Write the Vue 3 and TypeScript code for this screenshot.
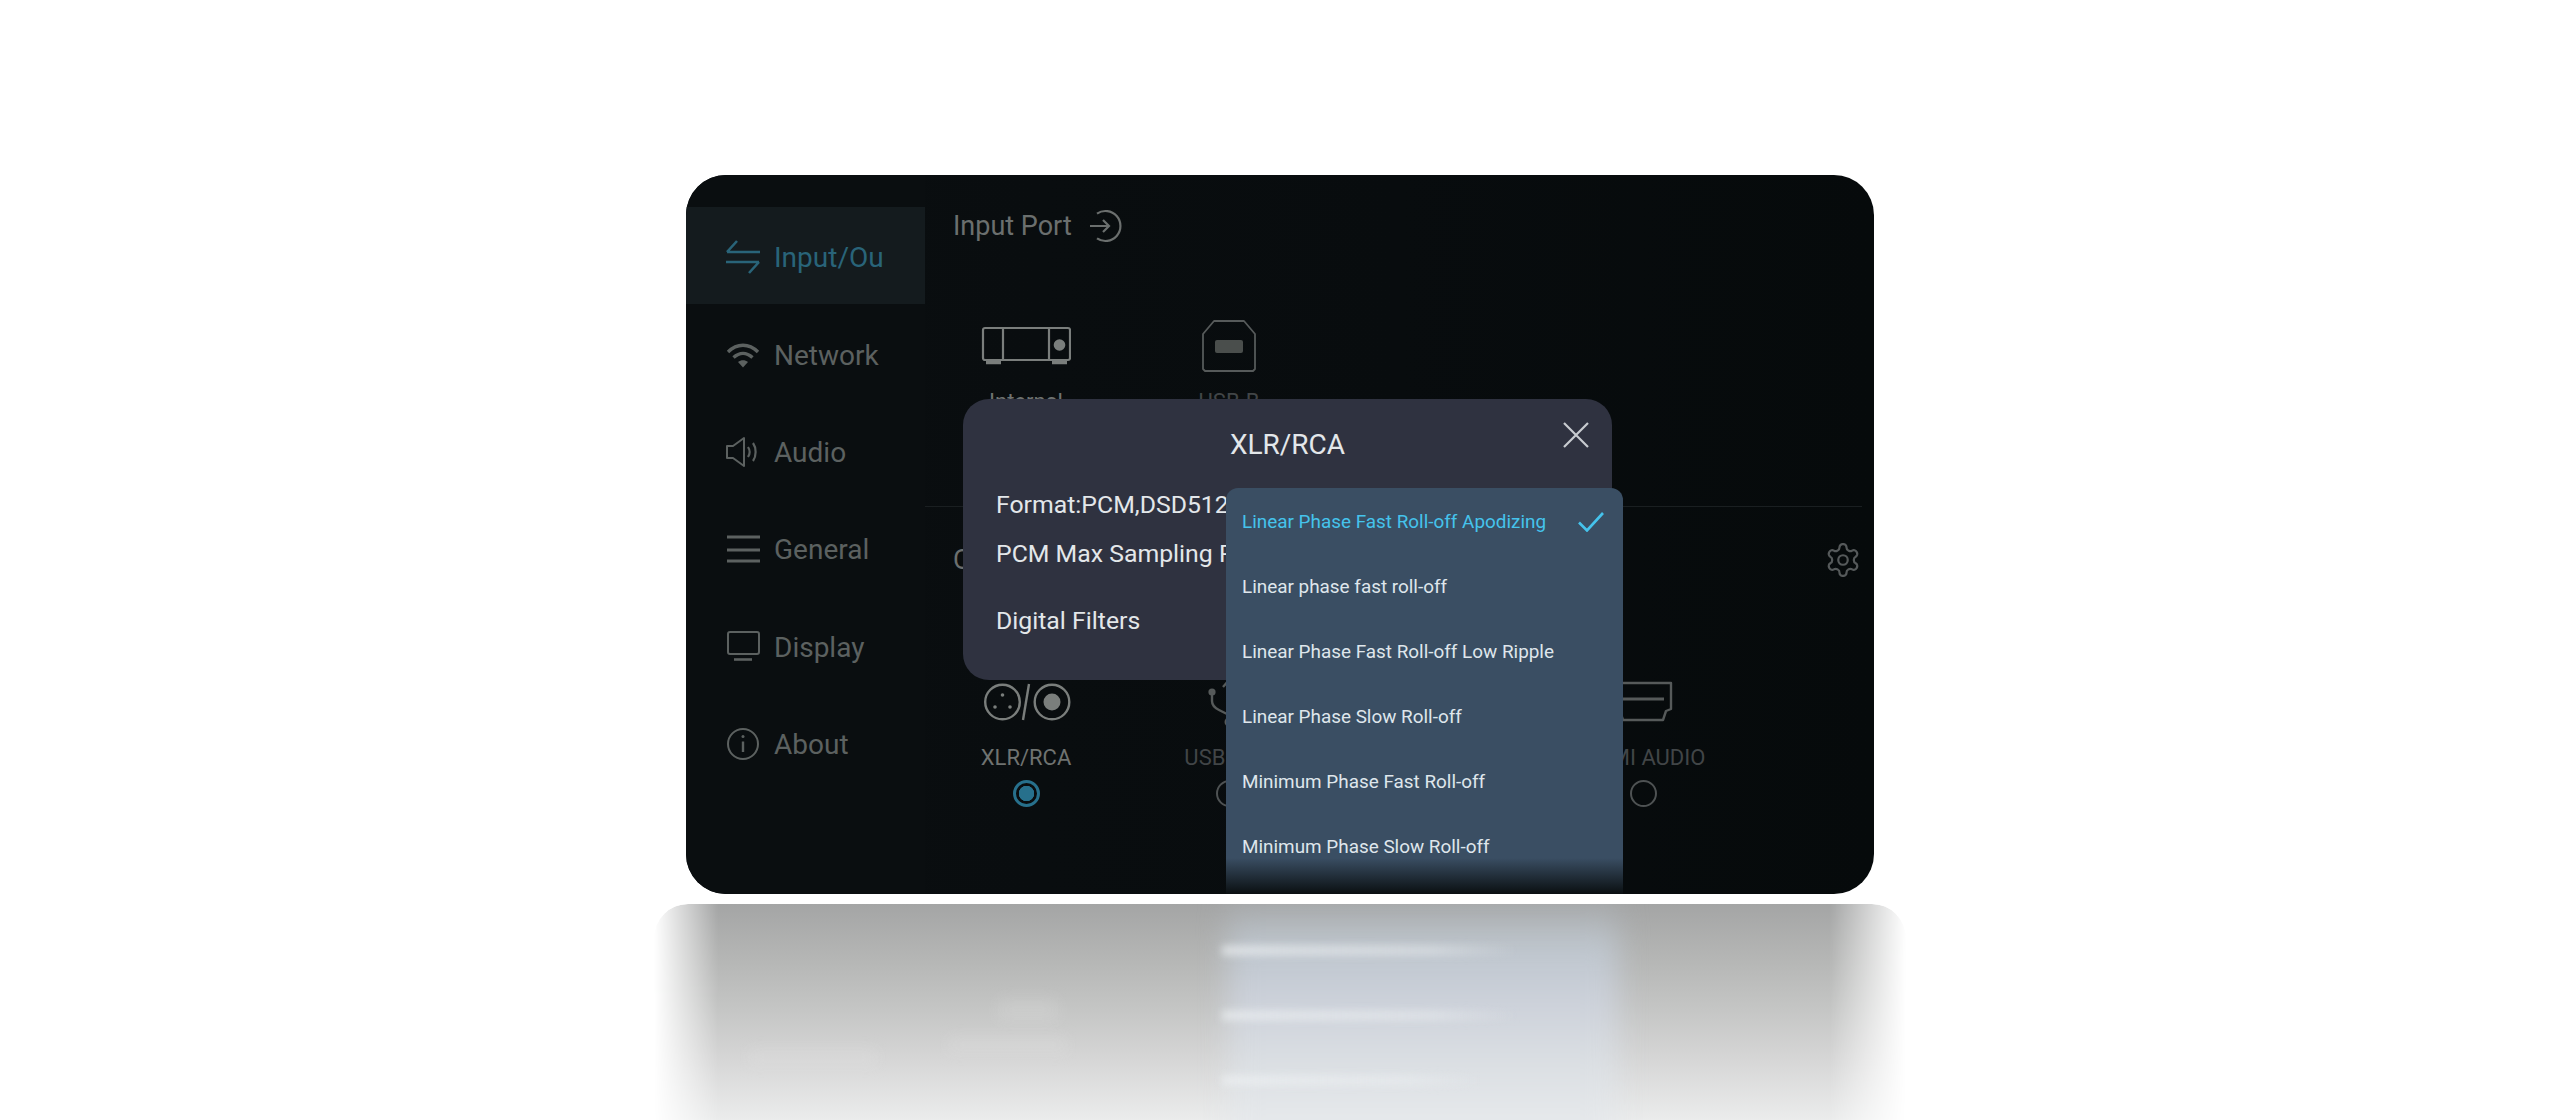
<script setup lang="ts">
const filters: string[] = [
  'Linear Phase Fast Roll-off Apodizing',
  'Linear phase fast roll-off',
  'Linear Phase Fast Roll-off Low Ripple',
  'Linear Phase Slow Roll-off',
  'Minimum Phase Fast Roll-off',
  'Minimum Phase Slow Roll-off',
]
</script>

<template>
  <div class="page">
    <section class="card">
      <aside class="sidebar">
        <div class="nav active">
          <svg class="nav-icon" viewBox="0 0 34 34" fill="none" stroke="currentColor" stroke-width="2.6">
            <path d="M1 12h33M1 12 11 1M0 22h33M33 22 23 33" />
          </svg>
          <span class="nav-label">Input/Output</span>
        </div>
        <div class="nav">
          <svg class="nav-icon" viewBox="0 0 34 34" fill="none" stroke="currentColor" stroke-width="3.4">
            <path d="M2 14C11 5 23 5 32 14M7.5 19.5C13.5 14 20.500 14 26.500 19.500" />
            <path d="M12 24c3-2.500 7-2.500 10 0l-5 5.500z" fill="currentColor" stroke="none" />
          </svg>
          <span class="nav-label">Network</span>
        </div>
        <div class="nav">
          <svg class="nav-icon" viewBox="0 0 34 34" fill="none" stroke="currentColor" stroke-width="2">
            <path d="M1 11h6L18 3v28L7 23H1z" stroke-linejoin="round" />
            <path d="M22 12c2 3 2 7 0 10M27 8c3.500 5 3.500 13 0 18" stroke-width="2.200" />
          </svg>
          <span class="nav-label">Audio</span>
        </div>
        <div class="nav">
          <svg class="nav-icon" viewBox="0 0 34 34" fill="none" stroke="currentColor" stroke-width="3.200">
            <path d="M1 5h33M1 18h33M1 29h33" />
          </svg>
          <span class="nav-label">General</span>
        </div>
        <div class="nav">
          <svg class="nav-icon" viewBox="0 0 34 34" fill="none" stroke="currentColor" stroke-width="2">
            <rect x="2" y="2" width="31" height="22" rx="2" />
            <path d="M8 29.500h18" stroke-width="2.600" />
          </svg>
          <span class="nav-label">Display</span>
        </div>
        <div class="nav">
          <svg class="nav-icon" viewBox="0 0 34 34" fill="none" stroke="currentColor" stroke-width="2">
            <circle cx="17" cy="17" r="15" />
            <path d="M17 14.500V25" stroke-width="2.400" />
            <circle cx="17" cy="9.500" r="1.500" fill="currentColor" stroke="none" />
          </svg>
          <span class="nav-label">About</span>
        </div>
      </aside>

      <main class="main">
        <div class="block input-block">
          <header class="head">
            <span class="head-title">Input Port</span>
            <svg class="head-icon" viewBox="0 0 34 34" fill="none" stroke="currentColor" stroke-width="2.200">
              <path d="M8 4.600A15 15 0 1 1 8 29.400" />
              <path d="M1 17h19M14 11l6 6-6 6" />
            </svg>
          </header>
          <div class="ports">
            <div class="port">
              <div class="port-icon">
                <svg width="90" height="40" viewBox="0 0 90 40" fill="none" stroke="#7a7e7c" stroke-width="2.200">
                  <rect x="2" y="2" width="87" height="32" rx="2" />
                  <path d="M22 2v32M68 2v32" />
                  <circle cx="78.500" cy="19" r="5.800" fill="#7a7e7c" stroke="none" />
                  <path d="M5 36.500h15M71 36.500h15" stroke-width="3.600" />
                </svg>
              </div>
              <div class="port-label">Internal</div>
              <div class="radio"></div>
            </div>
            <div class="port dim">
              <div class="port-icon">
                <svg width="54" height="52" viewBox="0 0 54 52" fill="none" stroke="#565a5a" stroke-width="1.800">
                  <path d="M1 14 12 1h30l11 13v35l-2 2H3l-2-2z" stroke-linejoin="round" />
                  <rect x="13" y="20" width="28" height="13" rx="2" fill="#4a4e4c" stroke="none" />
                </svg>
              </div>
              <div class="port-label">USB-B</div>
              <div class="radio"></div>
            </div>
          </div>
        </div>

        <div class="block output-block">
          <header class="head between">
            <span class="head-title">Output Port</span>
            <svg class="gear" viewBox="0 0 24 24" fill="none" stroke="currentColor" stroke-width="1.400">
              <path d="M12.220 2h-.44a2 2 0 0 0-2 2v.18a2 2 0 0 1-1 1.730l-.43.25a2 2 0 0 1-2 0l-.15-.08a2 2 0 0 0-2.730.73l-.22.38a2 2 0 0 0 .73 2.730l.15.1a2 2 0 0 1 1 1.720v.51a2 2 0 0 1-1 1.740l-.15.09a2 2 0 0 0-.73 2.730l.22.38a2 2 0 0 0 2.730.73l.15-.08a2 2 0 0 1 2 0l.43.25a2 2 0 0 1 1 1.730V20a2 2 0 0 0 2 2h.44a2 2 0 0 0 2-2v-.18a2 2 0 0 1 1-1.730l.43-.25a2 2 0 0 1 2 0l.15.08a2 2 0 0 0 2.730-.73l.22-.39a2 2 0 0 0-.73-2.730l-.15-.08a2 2 0 0 1-1-1.740v-.5a2 2 0 0 1 1-1.740l.15-.09a2 2 0 0 0 .73-2.730l-.22-.38a2 2 0 0 0-2.730-.73l-.15.08a2 2 0 0 1-2 0l-.43-.25a2 2 0 0 1-1-1.730V4a2 2 0 0 0-2-2z" />
              <circle cx="12" cy="12" r="3" />
            </svg>
          </header>
          <div class="ports out-ports">
            <div class="port">
              <div class="port-icon">
                <svg width="90" height="40" viewBox="0 0 90 40" fill="none" stroke="#7a7e7c" stroke-width="2.400">
                  <circle cx="21.500" cy="20" r="17.300" />
                  <circle cx="21.500" cy="13" r="1.800" fill="#7a7e7c" stroke="none" />
                  <circle cx="14" cy="25" r="1.800" fill="#7a7e7c" stroke="none" />
                  <circle cx="29" cy="25" r="1.800" fill="#7a7e7c" stroke="none" />
                  <path d="M48 2 42 38" />
                  <circle cx="71" cy="20" r="17.300" />
                  <circle cx="71" cy="20" r="8.500" fill="#7a7e7c" stroke="none" />
                </svg>
              </div>
              <div class="port-label">XLR/RCA</div>
              <div class="radio on"></div>
            </div>
            <div class="port dim">
              <div class="port-icon">
                <svg width="44" height="50" viewBox="0 0 44 50" fill="none" stroke="#565a5a" stroke-width="2.400">
                  <path d="M22 46V5M16 10l6-7 6 7M5 18v6c0 5 3 7 7 9l10 5M36 14v5c0 5-3 7-6 9l-8 4" />
                  <circle cx="5" cy="15" r="3.600" fill="#565a5a" stroke="none" />
                  <circle cx="22" cy="45" r="4.500" fill="#565a5a" stroke="none" />
                </svg>
              </div>
              <div class="port-label">USB DAC</div>
              <div class="radio"></div>
            </div>
            <div class="port dim hdmi">
              <div class="port-icon">
                <svg width="60" height="42" viewBox="0 0 60 42" fill="none" stroke="#565a5a" stroke-width="2.400">
                  <path d="M2 2h56v26l-5 2-3 9H10l-3-9-5-2z" stroke-linejoin="round" />
                  <path d="M9 18h42" stroke-width="3" />
                </svg>
              </div>
              <div class="port-label">HDMI AUDIO</div>
              <div class="radio"></div>
            </div>
          </div>
        </div>
      </main>

      <div class="modal">
        <h2 class="modal-title">XLR/RCA</h2>
        <svg class="close" viewBox="0 0 26 26" fill="none" stroke="currentColor" stroke-width="2.200">
          <path d="M1 1l24 24M25 1 1 25" />
        </svg>
        <p class="line format">Format:PCM,DSD512</p>
        <p class="line rate">PCM Max Sampling Rate</p>
        <p class="line digital">Digital Filters</p>
      </div>

      <div class="dropdown">
        <div v-for="(f, i) in filters" :key="f" class="option" :class="{ selected: i === 0 }">
          <span>{{ f }}</span>
          <svg v-if="i === 0" class="check" viewBox="0 0 26 20" fill="none" stroke="currentColor" stroke-width="2.600">
            <path d="M1 10.500 9 18.500 25 1" />
          </svg>
        </div>
        <div class="fade"></div>
      </div>
    </section>

    <div class="reflection">
      <div class="tint"></div>
      <div class="streak s1"></div>
      <div class="streak s2"></div>
      <div class="streak s3"></div>
      <div class="smear m1"></div>
      <div class="smear m2"></div>
      <div class="smear m3"></div>
    </div>
  </div>
</template>

<style>
html, body { margin: 0; background: #fff; }
</style>

<style scoped>
.page {
  width: 2560px;
  height: 1120px;
  overflow: hidden;
  background: #fff;
  padding-top: 175px;
  box-sizing: border-box;
  font-family: Roboto, "Liberation Sans", sans-serif;
  display: flex;
  flex-direction: column;
  align-items: center;
}
.card {
  position: relative;
  width: 1188px;
  height: 719px;
  flex: none;
  border-radius: 40px;
  overflow: hidden;
  display: flex;
  background: linear-gradient(90deg, #0a0e10 0, #080c0e 60%, #060a0b 100%);
}
.sidebar {
  width: 239px;
  flex: none;
  padding-top: 32px;
  background: #0a0e10;
  box-sizing: border-box;
}
.nav {
  height: 97.400px;
  box-sizing: border-box;
  padding: 3px 0 0 40px;
  display: flex;
  align-items: center;
  gap: 14px;
  color: #5c6160;
}
.nav.active {
  background: #141b1e;
  color: #296479;
}
.nav-icon {
  width: 34px;
  height: 34px;
  flex: none;
}
.nav-label {
  width: 109px;
  padding-top: 2px;
  overflow: hidden;
  white-space: nowrap;
  font-size: 28px;
  line-height: 36px;
}
.main {
  flex: 1;
  display: flex;
  flex-direction: column;
  min-width: 0;
}
.block {
  padding-left: 28px;
  padding-right: 12px;
}
.input-block {
  height: 332px;
  padding-top: 34px;
  box-sizing: border-box;
  border-bottom: 1px solid #1a1f21;
  margin-right: 12px;
  padding-right: 0;
}
.output-block {
  padding-top: 36px;
}
.head {
  display: flex;
  align-items: center;
  gap: 17px;
  height: 34px;
  color: #6b6f6e;
}
.head.between {
  justify-content: space-between;
}
.head-title {
  font-size: 27px;
  line-height: 34px;
}
.head-icon {
  width: 34px;
  height: 34px;
}
.gear {
  width: 38px;
  height: 38px;
  color: #55595a;
}
.ports {
  display: grid;
  grid-template-columns: 203px 207px 207px 146px;
  margin-top: 73px;
}
.out-ports {
  margin-top: 95px;
}
.port {
  width: 146px;
  display: flex;
  flex-direction: column;
  align-items: center;
  color: #6f7371;
}
.port.dim {
  color: #414547;
}
.port.hdmi {
  grid-column: 4;
}
.port-icon {
  height: 60px;
  display: flex;
  align-items: center;
  justify-content: center;
}
.port-label {
  margin-top: 10px;
  font-size: 22px;
  line-height: 32px;
  white-space: nowrap;
}
.radio {
  width: 27px;
  height: 27px;
  margin-top: 6px;
  box-sizing: border-box;
  border: 2px solid #4e5253;
  border-radius: 50%;
}
.radio.on {
  border: 3px solid #27708c;
  background: radial-gradient(circle, #27708c 0 7.500px, transparent 8px);
}
.modal {
  position: absolute;
  left: 277px;
  top: 224px;
  width: 649px;
  height: 281px;
  box-sizing: border-box;
  padding: 26px 33px 0;
  border-radius: 26px;
  background: #2f3240;
  color: #e3e7ea;
}
.modal-title {
  margin: 0;
  text-align: center;
  font-size: 28px;
  line-height: 40px;
  font-weight: 400;
}
.close {
  position: absolute;
  top: 23px;
  right: 23px;
  width: 26px;
  height: 26px;
  color: #c8ccd0;
}
.line {
  margin: 0;
  font-size: 24.800px;
  line-height: 34px;
  white-space: nowrap;
}
.format { margin-top: 23px; }
.rate { margin-top: 15px; }
.digital { margin-top: 33px; }
.dropdown {
  position: absolute;
  left: 540px;
  top: 313px;
  bottom: 0;
  width: 397px;
  padding-top: 1px;
  box-sizing: border-box;
  overflow: hidden;
  border-radius: 12px 12px 0 0;
  background: #3a4e63;
}
.option {
  height: 65px;
  padding: 0 19px 0 16px;
  display: flex;
  align-items: center;
  justify-content: space-between;
  font-size: 18.900px;
  color: #dfe6ec;
  white-space: nowrap;
}
.option.selected {
  color: #45c3ec;
}
.check {
  width: 26px;
  height: 20px;
}
.fade {
  position: absolute;
  left: 0;
  right: 0;
  bottom: 0;
  height: 36px;
  background: linear-gradient(rgba(10, 15, 17, 0), #0a0f11);
}
.reflection {
  position: relative;
  width: 1252px;
  height: 216px;
  margin-top: 10px;
  flex: none;
  overflow: hidden;
  border-radius: 34px 34px 0 0;
  background: linear-gradient(#a4a5a5 0, #b4b5b4 24%, #c4c5c4 48%, #d6d6d6 72%, #ebecec 100%);
  -webkit-mask-image: linear-gradient(90deg, transparent 0, #000 64px, #000 calc(100% - 76px), transparent 100%);
  mask-image: linear-gradient(90deg, transparent 0, #000 64px, #000 calc(100% - 76px), transparent 100%);
}
.tint {
  position: absolute;
  left: 574px;
  top: -30px;
  width: 390px;
  height: 280px;
  filter: blur(14px);
  background: linear-gradient(rgba(170, 175, 180, 0) 0, rgba(170, 175, 180, .35) 12%, #bdc5cd 26%, #cbd0d9 44%, #dbdfe3 68%, #eceef0 100%);
}
.streak {
  position: absolute;
  left: 568px;
  width: 296px;
  height: 9px;
  background: linear-gradient(90deg, rgba(238, 241, 243, .75), rgba(238, 241, 243, .5) 70%, rgba(238, 241, 243, 0));
  filter: blur(4px);
}
.s1 { top: 42px; }
.s2 { top: 107px; }
.s3 { top: 172px; width: 262px; }
.smear {
  position: absolute;
  height: 14px;
  background: rgba(240, 240, 240, .18);
  filter: blur(8px);
}
.m1 { left: 94px; top: 146px; width: 130px; }
.m2 { left: 294px; top: 134px; width: 120px; }
.m3 { left: 344px; top: 96px; width: 60px; height: 20px; }
</style>
